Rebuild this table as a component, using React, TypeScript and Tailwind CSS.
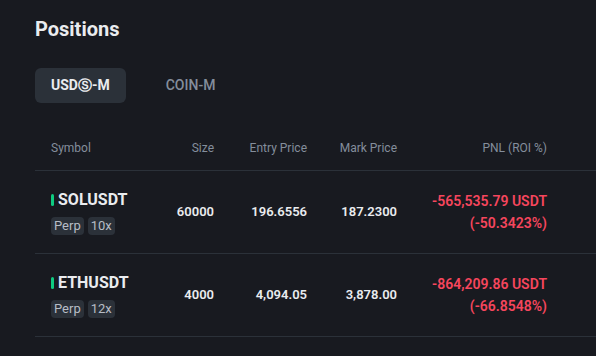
const positions = [
  {
    symbol: "SOLUSDT",
    leverage: "10x",
    size: "60000",
    entry: "196.6556",
    mark: "187.2300",
    pnl: "-565,535.79 USDT",
    roi: "(-50.3423%)",
  },
  {
    symbol: "ETHUSDT",
    leverage: "12x",
    size: "4000",
    entry: "4,094.05",
    mark: "3,878.00",
    pnl: "-864,209.86 USDT",
    roi: "(-66.8548%)",
  },
];

const cols = "grid grid-cols-[113px_50px_93px_90px_150px_1fr] pl-4";

export default function App() {
  return (
    <div className="h-[356px] w-[596px] overflow-hidden bg-[#181a20] pl-[35px] font-['Roboto','Liberation_Sans',sans-serif] text-[#eaecef]">
      <h1 className="pt-[15px] text-[20px] font-bold leading-7 text-[#eaecef]">Positions</h1>

      <div className="mt-[25px] flex items-center gap-6">
        <button className="h-[35px] rounded-md bg-[#2b3139] px-4 text-[14px] font-bold text-[#eaecef]">
          USDⓈ-M
        </button>
        <button className="h-[35px] px-4 text-[14px] font-medium text-[#848e9c]">COIN-M</button>
      </div>

      <div className="mt-[23px]">
        <div className={`${cols} h-[44px] items-center text-[12px] text-[#848e9c]`}>
          <span>Symbol</span>
          <span className="text-right">Size</span>
          <span className="text-right">Entry Price</span>
          <span className="text-right">Mark Price</span>
          <span className="text-right">PNL (ROI %)</span>
          <span />
        </div>

        {positions.map((p) => (
          <div
            key={p.symbol}
            className={`${cols} h-[83px] items-center border-t border-[#2b3139] text-[13px] font-semibold`}
          >
            <div className="flex flex-col gap-[7px] pt-[1px]">
              <div className="flex items-center gap-[4px]">
                <span className="h-[12px] w-[3px] rounded-full bg-[#0ecb81]" />
                <span className="text-[16px] font-bold leading-5">{p.symbol}</span>
              </div>
              <div className="flex gap-1">
                <span className="rounded-sm bg-[#2b3139] px-[3px] text-[13px] font-normal leading-[18px] text-[#b7bdc6]">
                  Perp
                </span>
                <span className="rounded-sm bg-[#2b3139] px-[3px] text-[13px] font-normal leading-[18px] text-[#b7bdc6]">
                  {p.leverage}
                </span>
              </div>
            </div>
            <span className="text-right">{p.size}</span>
            <span className="text-right">{p.entry}</span>
            <span className="text-right">{p.mark}</span>
            <div className="flex flex-col items-end text-[14px] leading-[22px] text-[#f6465d]">
              <span>{p.pnl}</span>
              <span>{p.roi}</span>
            </div>
            <span />
          </div>
        ))}
        <div className="border-t border-[#2b3139]" />
      </div>
    </div>
  );
}
